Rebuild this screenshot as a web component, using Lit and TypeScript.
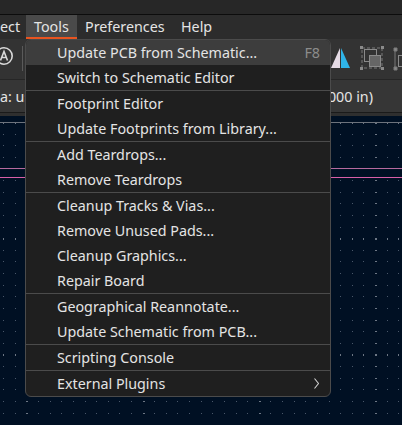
import { LitElement, html, svg, css } from "lit";
import { customElement } from "lit/decorators.js";

// null marks a separator line in the menu
const MENU_ITEMS: (null | { label: string; hint?: string; active?: boolean; sub?: boolean })[] = [
  { label: "Update PCB from Schematic...", hint: "F8", active: true },
  { label: "Switch to Schematic Editor" },
  null,
  { label: "Footprint Editor" },
  { label: "Update Footprints from Library..." },
  null,
  { label: "Add Teardrops..." },
  { label: "Remove Teardrops" },
  null,
  { label: "Cleanup Tracks & Vias..." },
  { label: "Remove Unused Pads..." },
  { label: "Cleanup Graphics..." },
  { label: "Repair Board" },
  null,
  { label: "Geographical Reannotate..." },
  { label: "Update Schematic from PCB..." },
  null,
  { label: "Scripting Console" },
  null,
  { label: "External Plugins", sub: true },
];

const GRID_STEP = 11.62;
const GRID_X0 = 375;
const GRID_Y0 = 123;

@customElement("app-root")
export class AppRoot extends LitElement {
  static styles = css`
    :host {
      display: block;
      width: 402px;
      height: 425px;
      overflow: hidden;
      position: relative;
      font-family: "Noto Sans", sans-serif;
      font-size: 14.3px;
      color: #e4e4e4;
    }
    .shell {
      display: flex;
      flex-direction: column;
      height: 425px;
    }
    .title {
      height: 14px;
      background: #272727;
      border-bottom: 1px solid #0c0c0c;
      flex-shrink: 0;
    }
    .menubar {
      height: 24px;
      display: flex;
      background: #2c2c2c;
      flex-shrink: 0;
    }
    .menubar span {
      padding: 0 8px;
      line-height: 23px;
      height: 22px;
      border-bottom: 2px solid transparent;
    }
    .menubar .clipped {
      padding: 0;
      width: 26px;
    }
    .menubar .open {
      background: #4a4a4a;
      border-bottom-color: #e95420;
      width: 35px;
    }
    .menubar .prefs {
      width: 80px;
    }
    .toolbar {
      height: 41px;
      box-sizing: border-box;
      background: #333333;
      border-bottom: 1px solid #262626;
      flex-shrink: 0;
    }
    .toolbar svg {
      display: block;
    }
    .status {
      height: 32px;
      padding: 0 29px 0 0;
      display: flex;
      align-items: center;
      justify-content: space-between;
      background: #363636;
      flex-shrink: 0;
    }
    .rule {
      height: 4px;
      background: #2f2f2f;
      border-top: 1px solid #1a1a1a;
      box-sizing: border-box;
      flex-shrink: 0;
    }
    .canvas {
      flex: 1;
      background: #001023;
    }
    .canvas svg {
      display: block;
    }
    .menu {
      position: absolute;
      left: 25px;
      top: 39px;
      width: 306px;
      box-sizing: border-box;
      background: #1f1f1f;
      border: 1px solid #4b4b4b;
      border-radius: 6px;
      overflow: hidden;
    }
    .row {
      height: 25px;
      box-sizing: border-box;
      display: flex;
      align-items: center;
      justify-content: space-between;
      padding: 0 10px 1px 31px;
    }
    .row.active {
      background: #3d3d3d;
    }
    .hint {
      color: #8c8c8c;
    }
    .sep {
      height: 1px;
      background: #4b4b4b;
    }
    .chevron {
      display: block;
      margin-right: 1px;
    }
  `;

  private gridDots() {
    const dots = [];
    for (let i = -32; i <= 3; i++) {
      for (let j = 0; j <= 26; j++) {
        const x = Math.round(GRID_X0 + i * GRID_STEP);
        const y = Math.round(GRID_Y0 + j * GRID_STEP) - 117;
        const majorCol = i % 10 === 0;
        const majorRow = j % 10 === 0;
        dots.push(svg`<rect x=${x} y=${y} width=${majorCol ? 2 : 1} height=${majorRow ? 2 : 1}
          fill=${majorCol || majorRow ? "#6d7784" : "#4a586a"} />`);
      }
    }
    return dots;
  }

  render() {
    return html`
      <div class="shell">
        <div class="title"></div>
        <div class="menubar">
          <span class="clipped">ect</span>
          <span class="open">Tools</span>
          <span class="prefs">Preferences</span>
          <span>Help</span>
        </div>
        <div class="toolbar">
          <svg width="402" height="40" viewBox="0 40 402 40">
            <circle cx="4" cy="57" r="8.2" fill="none" stroke="#d8d8d8" stroke-width="1.6" />
            <path d="M0.5 61.5 L4 52.5 L7.5 61.5 M1.5 58.5 H6.5" fill="none" stroke="#d8d8d8" stroke-width="1.6" />
            <rect x="22" y="47" width="1" height="25" fill="#5a5a5a" />
            <path d="M340 49 V69 H331 Z" fill="#e6dce6" />
            <path d="M341 49 V69 H350 Z" fill="#2fb4e8" />
            <rect x="362" y="49" width="20" height="20" fill="none" stroke="#7a7a7a" stroke-dasharray="3 2" />
            <path d="M360 47h3v3h-3z M381 47h3v3h-3z M360 68h3v3h-3z M381 68h3v3h-3z" fill="#8a8a8a" />
            <rect x="364.5" y="50.5" width="12" height="12" fill="none" stroke="#8a8a8a" />
            <rect x="369.5" y="56.5" width="11" height="11" fill="#666666" stroke="#8a8a8a" />
            <path d="M394 49h3v3h-3z M394 68h3v3h-3z M395 52v16" fill="#8a8a8a" stroke="#7a7a7a" />
            <rect x="398.5" y="56.5" width="6" height="11" fill="none" stroke="#8a8a8a" />
          </svg>
        </div>
        <div class="status">
          <span>a: us</span>
          <span>000 in)</span>
        </div>
        <div class="rule"></div>
        <div class="canvas">
          <svg width="402" height="308">
            ${this.gridDots()}
            <rect x="0" y="6" width="402" height="1" fill="#6d737c" />
            <rect x="0" y="52" width="402" height="1" fill="#b56a9e" />
            <rect x="0" y="61" width="402" height="1" fill="#d95fa8" />
          </svg>
        </div>
      </div>
      <div class="menu">
        ${MENU_ITEMS.map((item) =>
          item === null
            ? html`<div class="sep"></div>`
            : html`<div class="row ${item.active ? "active" : ""}">
                <span>${item.label}</span>
                ${item.hint ? html`<span class="hint">${item.hint}</span>` : ""}
                ${item.sub
                  ? html`<svg class="chevron" width="5" height="11" viewBox="0 0 5 11">
                      <path d="M0.5 0.5 L4.5 5.5 L0.5 10.5" fill="none" stroke="#d0d0d0" stroke-width="1.1" />
                    </svg>`
                  : ""}
              </div>`
        )}
      </div>
    `;
  }
}
